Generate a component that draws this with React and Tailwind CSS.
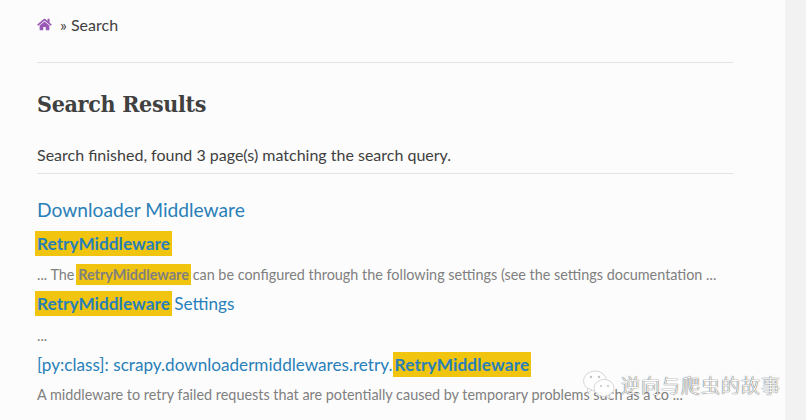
const HomeIcon = () => (
  <svg width="15" height="13" viewBox="0 0 576 512" className="shrink-0" fill="#9b59b6">
    <path d="M280.4 148.3 96 300.1V464a16 16 0 0 0 16 16l112-.3a16 16 0 0 0 15.9-16V368a16 16 0 0 1 16-16h64a16 16 0 0 1 16 16v95.6a16 16 0 0 0 16 16.1l112 .3a16 16 0 0 0 16-16V300L295.7 148.3a12.2 12.2 0 0 0-15.3 0zM571.6 251.5 488 182.6V44a12 12 0 0 0-12-12h-56a12 12 0 0 0-12 12v72.6L318.5 43a48 48 0 0 0-61 0L4.3 251.5a12 12 0 0 0-1.6 16.9l25.5 31A12 12 0 0 0 45.2 301l235.2-193.7a12.2 12.2 0 0 1 15.3 0L530.9 301a12 12 0 0 0 16.9-1.6l25.5-31a12 12 0 0 0-1.7-17z" />
  </svg>
);

const Mark = ({ className, children }) => (
  <span className={`bg-[#f1c40f] ${className}`}>{children}</span>
);

const WeChat = () => (
  <svg width="34" height="30" viewBox="0 0 34 30" fill="#ffffff" stroke="#c9c9c9" strokeWidth="0.8">
    <ellipse cx="13" cy="11" rx="11.5" ry="10" />
    <path d="M6 18l-1 5 5-3z" />
    <ellipse cx="22" cy="18" rx="10" ry="8.5" />
    <path d="M27 25l2 4-5-2.5z" />
    <circle cx="9" cy="7" r="1.2" fill="#bbbbbb" stroke="none" />
    <circle cx="17" cy="7" r="1.2" fill="#bbbbbb" stroke="none" />
    <circle cx="19" cy="16" r="1" fill="#bbbbbb" stroke="none" />
    <circle cx="26" cy="16" r="1" fill="#bbbbbb" stroke="none" />
  </svg>
);

export default function App() {
  return (
    <div className="relative flex h-[420px] w-[806px] overflow-hidden bg-[#f2f2f2] font-['Lato','Noto_Sans',sans-serif] text-[#404040]">
      <main className="h-full w-[785px] bg-[#fcfcfc] pl-[37px] pr-[52px]">
        <nav className="flex h-[63px] items-start border-b border-[#e1e4e5] pt-[15px] text-[16px] leading-[19px]">
          <span className="flex h-[19px] items-center"><HomeIcon /></span>
          <span className="ml-[8px]">» Search</span>
        </nav>
        <h1 className="mt-[26px] font-['DejaVu_Serif_Condensed','DejaVu_Serif',serif] text-[23px] font-bold leading-[30px] tracking-[-0.3px] text-[#404040]">
          Search Results
        </h1>
        <p className="mt-[26px] border-b border-[#e1e4e5] pb-[9px] text-[16px] leading-[19px]">
          Search finished, found 3 page(s) matching the search query.
        </p>
        <h2 className="mt-[24px] text-[19.2px] leading-[24px] text-[#2980b9]">Downloader Middleware</h2>
        <div className="mt-[9px] h-[25px] text-[17.14px] leading-[25px] text-[#2980b9]">
          <Mark className="-ml-[2px] inline-block px-[2px] font-bold tracking-[0.07px]">RetryMiddleware</Mark>
        </div>
        <p className="mt-[8px] h-[21px] whitespace-nowrap text-[14.4px] leading-[21px] text-[#808080]">
          ... The <Mark className="-mx-[2px] inline-block px-[2px] font-bold">RetryMiddleware</Mark> can be configured through the following settings (see the settings documentation ...
        </p>
        <div className="mt-[6px] h-[25px] text-[17.14px] leading-[25px] text-[#2980b9]">
          <Mark className="-ml-[2px] -mr-[2px] inline-block px-[2px] font-bold tracking-[0.07px]">RetryMiddleware</Mark> Settings
        </div>
        <p className="mt-[9px] h-[21px] text-[14.4px] leading-[21px] text-[#808080]">...</p>
        <div className="mt-[6px] h-[25px] whitespace-nowrap text-[17.14px] leading-[25px] text-[#2980b9]">
          [py:class]: scrapy.downloadermiddlewares.retry.<Mark className="inline-block px-[2px] font-bold tracking-[0.2px]">RetryMiddleware</Mark>
        </div>
        <p className="mt-[7px] whitespace-nowrap text-[14.4px] leading-[21px] text-[#808080]">
          A middleware to retry failed requests that are potentially caused by temporary problems such as a co ...
        </p>
      </main>
      <div className="absolute left-[582px] top-[370px] flex items-center gap-[5px]">
        <span className="opacity-90"><WeChat /></span>
        <span className="font-['Noto_Sans_CJK_SC',sans-serif] text-[19px] font-light leading-[24px] tracking-[1px] text-white [text-shadow:0_0_1px_#555,0_0_1px_#555]">
          逆向与爬虫的故事
        </span>
      </div>
    </div>
  );
}
